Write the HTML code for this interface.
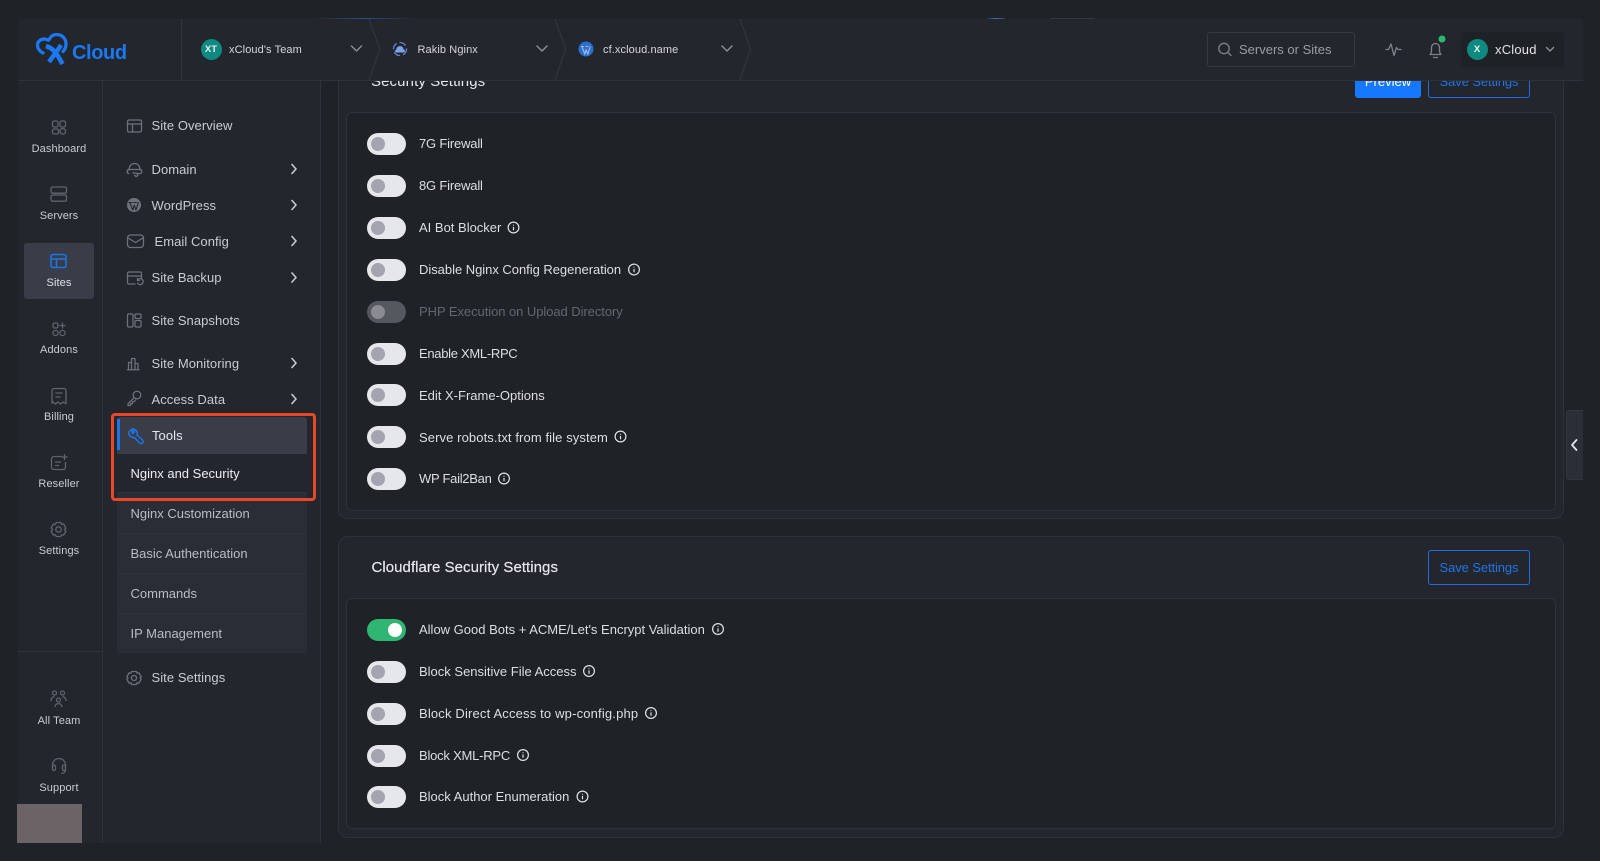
<!DOCTYPE html>
<html><head><meta charset="utf-8"><title>xCloud</title>
<style>
*{box-sizing:border-box}
html,body{margin:0;width:1600px;height:861px;overflow:hidden;background:#1f2226;font-family:"Liberation Sans",sans-serif;color:#e4e6ea}
.a{position:absolute}
.t{position:absolute;line-height:20px;height:20px;white-space:nowrap}
svg{position:absolute;overflow:visible}
.n{font-size:11px;letter-spacing:.1px;color:#c9ccd2;width:84px;left:17px;text-align:center}
.ni{fill:none;stroke:#5f636c;stroke-width:1.3}
.m{font-size:13px;letter-spacing:.06px;color:#c9ccd2;left:151.5px}
.sub{font-size:13px;letter-spacing:0;color:#b9bcc3;left:130.5px}
.l{font-size:13px;letter-spacing:0;color:#dcdfe3;left:419px}
.tg{position:absolute;left:367px;width:39px;height:22px;border-radius:11px;background:#e5e7eb}
.tg i{position:absolute;left:4px;top:4px;width:14px;height:14px;border-radius:50%;background:#a2a5af}
.ci{fill:none;stroke:#dfe2e6;stroke-width:1.2}
.ch{fill:none;stroke:#c6c9cf;stroke-width:1.6;stroke-linecap:round;stroke-linejoin:round}
.hch{fill:none;stroke:#8d9199;stroke-width:1.4;stroke-linecap:round;stroke-linejoin:round}
.ht{font-size:11px;letter-spacing:.1px;color:#d5d7db}
</style></head><body>

<!-- nav backgrounds -->
<div class="a" style="left:18px;top:80px;width:85px;height:763px;background:#23262d;border-right:1px solid #2e323a"></div>
<div class="a" style="left:103px;top:80px;width:218px;height:763px;background:#23262d;border-right:1px solid #2e323a"></div>

<!-- sections -->
<div class="a" style="left:338px;top:60px;width:1226px;height:459px;background:#23262d;border:1px solid #2e323a;border-radius:10px"></div>
<div class="a" style="left:346px;top:112px;width:1210px;height:399px;background:#1f2226;border:1px solid #2e323a;border-radius:6px"></div>
<div class="t" style="left:371px;top:72px;font-size:15px;letter-spacing:.1px;color:#e6e8ec">Security Settings</div>
<div class="a" style="left:1355px;top:62px;width:66px;height:36px;background:#1677ff;border-radius:3px"></div>
<div class="t" style="left:1355px;top:72px;width:66px;text-align:center;font-size:13px;color:#fff">Preview</div>
<div class="a" style="left:1428px;top:62px;width:102px;height:36px;border:1px solid #1d6fe0;border-radius:3px"></div>
<div class="t" style="left:1428px;top:72px;width:102px;text-align:center;font-size:13px;color:#1f74e6;letter-spacing:-.1px">Save Settings</div>

<div class="a" style="left:338px;top:536px;width:1226px;height:302px;background:#23262d;border:1px solid #2e323a;border-radius:10px"></div>
<div class="a" style="left:346px;top:598px;width:1210px;height:231px;background:#1f2226;border:1px solid #2e323a;border-radius:6px"></div>
<div class="t" style="left:371.5px;top:558px;font-size:15px;letter-spacing:.05px;color:#e6e8ec;-webkit-text-stroke:.2px #e6e8ec">Cloudflare Security Settings</div>
<div class="a" style="left:1428px;top:550px;width:102px;height:35px;border:1px solid #1d6fe0;border-radius:3px"></div>
<div class="t" style="left:1428px;top:558px;width:102px;text-align:center;font-size:13px;color:#1f74e6;letter-spacing:-.1px">Save Settings</div>

<!-- toggles section 1 -->
<div class="tg" style="top:133px"><i></i></div><div class="t l" style="top:134px;letter-spacing:-.18px">7G Firewall</div>
<div class="tg" style="top:175px"><i></i></div><div class="t l" style="top:176px;letter-spacing:-.18px">8G Firewall</div>
<div class="tg" style="top:217px"><i></i></div><div class="t l" style="top:218px">AI Bot Blocker</div>
<div class="tg" style="top:259px"><i></i></div><div class="t l" style="top:260px;letter-spacing:-.03px">Disable Nginx Config Regeneration</div>
<div class="tg" style="top:301px;background:#55585f"><i style="background:#8a8c92"></i></div><div class="t l" style="top:302px;color:#64676e;letter-spacing:-.06px">PHP Execution on Upload Directory</div>
<div class="tg" style="top:343px"><i></i></div><div class="t l" style="top:344px;letter-spacing:-.3px">Enable XML-RPC</div>
<div class="tg" style="top:384px"><i></i></div><div class="t l" style="top:386px">Edit X-Frame-Options</div>
<div class="tg" style="top:426px"><i></i></div><div class="t l" style="top:428px;letter-spacing:.1px">Serve robots.txt from file system</div>
<div class="tg" style="top:468px"><i></i></div><div class="t l" style="top:469px;letter-spacing:-.28px">WP Fail2Ban</div>

<!-- toggles section 2 -->
<div class="tg" style="top:619px;background:#2fb673"><i style="left:21px;background:#fff"></i></div><div class="t l" style="top:620px">Allow Good Bots + ACME/Let's Encrypt Validation</div>
<div class="tg" style="top:661px"><i></i></div><div class="t l" style="top:662px">Block Sensitive File Access</div>
<div class="tg" style="top:703px"><i></i></div><div class="t l" style="top:704px;letter-spacing:.17px">Block Direct Access to wp-config.php</div>
<div class="tg" style="top:745px"><i></i></div><div class="t l" style="top:746px;letter-spacing:-.22px">Block XML-RPC</div>
<div class="tg" style="top:786px"><i></i></div><div class="t l" style="top:787px">Block Author Enumeration</div>

<!-- info icons -->
<svg width="1600" height="861" style="left:0;top:0">
<defs><g id="inf"><circle r="5.4" class="ci"/><path d="M0-.6V2.8M0-2.8v.9" class="ci"/></g></defs>
<use href="#inf" x="513.5" y="227.5"/>
<use href="#inf" x="634" y="269.5"/>
<use href="#inf" x="620.5" y="436.5"/>
<use href="#inf" x="504" y="478.5"/>
<use href="#inf" x="718" y="629"/>
<use href="#inf" x="589" y="671"/>
<use href="#inf" x="651" y="713"/>
<use href="#inf" x="523" y="755"/>
<use href="#inf" x="582.5" y="796.5"/>
</svg>

<!-- side nav -->
<div class="a" style="left:24px;top:243px;width:70px;height:56px;background:#383d48;border-radius:3px"></div>
<div class="a" style="left:18px;top:651px;width:84px;height:1px;background:#30343c"></div>
<div class="t n" style="top:139px">Dashboard</div>
<div class="t n" style="top:206px">Servers</div>
<div class="t n" style="top:273px;color:#e0e2e6">Sites</div>
<div class="t n" style="top:340px">Addons</div>
<div class="t n" style="top:407px">Billing</div>
<div class="t n" style="top:474px">Reseller</div>
<div class="t n" style="top:541px">Settings</div>
<div class="t n" style="top:711px">All Team</div>
<div class="t n" style="top:778px">Support</div>

<svg width="1600" height="861" style="left:0;top:0">
<g class="ni">
<!-- dashboard -->
<rect x="52.5" y="121" width="5.5" height="6" rx="1.6"/><rect x="60" y="121" width="5.5" height="6" rx="1.6"/><rect x="52.5" y="129" width="6" height="5" rx="1.6"/><rect x="60" y="128.5" width="5.5" height="5.5" rx="2.5"/>
<!-- servers -->
<rect x="51" y="187" width="15.5" height="6.2" rx="1.5"/><rect x="51" y="195" width="15.5" height="6.2" rx="1.5"/>
<!-- addons -->
<rect x="53" y="323" width="5" height="5" rx="1.7"/><path d="M62.5 322.5v6M59.5 325.5h6"/><circle cx="55.5" cy="333" r="2.6"/><circle cx="62.5" cy="333" r="2.6"/>
<!-- billing -->
<path d="M52 390.5a2 2 0 0 1 2-2h10a2 2 0 0 1 2 2v13l-3-1.5-2.5 2-2.5-2-2.5 2-2.5-2-1 .8z"/><path d="M55.5 393h7M55.5 397h5"/>
<!-- reseller -->
<path d="M62 456.5h-8a2.5 2.5 0 0 0-2.5 2.5v8a2.5 2.5 0 0 0 2.5 2.5h9a2.5 2.5 0 0 0 2.5-2.5v-5"/><path d="M55 462h6M55 465.5h4M64.5 454v6M61.5 457h6"/>
<!-- settings -->
<circle cx="58.5" cy="529.5" r="2.7"/><path d="M56.2 522.5h4.6l.8 1.9 2-.4 2.3 4-1.4 1.5 1.4 1.6-2.3 4-2-.4-.8 1.8h-4.6l-.8-1.8-2 .4-2.3-4 1.4-1.6-1.4-1.5 2.3-4 2 .4z"/>
<!-- team -->
<circle cx="54.5" cy="693" r="2"/><circle cx="62.5" cy="693" r="2"/><circle cx="58.5" cy="700" r="2"/><path d="M51 701c0-2.8 1.500-4.300 3.500-4.300M66 701c0-2.800-1.500-4.300-3.500-4.300M55 707c0-2 1.500-3.400 3.500-3.400s3.500 1.400 3.500 3.400"/>
<!-- support -->
<path d="M52.500 769v-4a6.500 6.500 0 0 1 13 0v4"/><rect x="52.500" y="765" width="3" height="5.500" rx="1.500"/><rect x="62.500" y="765" width="3" height="5.500" rx="1.500"/><path d="M65.500 770c0 2-1.500 3.300-4 3.300"/>
</g>
<!-- sites -->
<g fill="none" stroke="#1f74e6" stroke-width="1.500"><rect x="51" y="254.500" width="15" height="13" rx="2"/><path d="M51 259h15M56.500 259v8.500"/></g>
</svg>
<div class="a" style="left:17px;top:804px;width:65px;height:39px;background:#6b6366"></div>

<!-- sub menu -->
<div class="a" style="left:117px;top:454px;width:190px;height:199px;background:#2a2d36"></div>
<div class="a" style="left:117px;top:417px;width:190px;height:37px;background:#383d48;border-radius:3px 3px 0 0"></div>
<div class="a" style="left:117px;top:419px;width:2.500px;height:31px;background:#1f74e6"></div>
<div class="a" style="left:117px;top:454px;width:190px;height:39px;background:#23262e;border-bottom:1px solid #2f333c"></div>
<div class="a" style="left:117px;top:533px;width:190px;height:1px;background:#2f333c"></div>
<div class="a" style="left:117px;top:573px;width:190px;height:1px;background:#2f333c"></div>
<div class="a" style="left:117px;top:613px;width:190px;height:1px;background:#2f333c"></div>

<div class="t m" style="top:116px">Site Overview</div>
<div class="t m" style="top:160px">Domain</div>
<div class="t m" style="top:196px">WordPress</div>
<div class="t m" style="top:231.500px;left:154.500px">Email Config</div>
<div class="t m" style="top:268px">Site Backup</div>
<div class="t m" style="top:311px">Site Snapshots</div>
<div class="t m" style="top:354px">Site Monitoring</div>
<div class="t m" style="top:390px">Access Data</div>
<div class="t m" style="top:426px;left:152px;color:#e6e8ec">Tools</div>
<div class="t sub" style="top:464px;color:#eceef1">Nginx and Security</div>
<div class="t sub" style="top:504px">Nginx Customization</div>
<div class="t sub" style="top:544px">Basic Authentication</div>
<div class="t sub" style="top:584px">Commands</div>
<div class="t sub" style="top:624px">IP Management</div>
<div class="t m" style="top:668px">Site Settings</div>

<svg width="1600" height="861" style="left:0;top:0">
<g fill="none" stroke="#6d727c" stroke-width="1.250" stroke-linecap="round" stroke-linejoin="round">
<!-- overview -->
<rect x="127.500" y="120" width="14" height="12" rx="1.500"/><path d="M127.500 124h14M132.500 124v8"/>
<!-- domain -->
<path d="M129 173.500c-2.500 0-2.500-3.500 0-3.700 .3-4.500 2.700-6.300 5.500-6.300s5.200 1.800 5.500 6.300c2 .3 2.300 2.500 1 3.700h-3"/><path d="M128 169.500h13M133 173h3.500l1.500 2.500-2 1.200-1.500-1.500"/>
<!-- wp -->
<circle cx="134" cy="205" r="7" fill="#6d727c" stroke="none"/><path d="M129.800 202.500l3 7.500 1.500-5 1.700 5 2.300-7.500M129 202.500h3M133.500 202.500h3" stroke="#23262d" stroke-width="1.100"/>
<!-- email -->
<rect x="127.500" y="235" width="16" height="12.500" rx="3"/><path d="M128 238l7.500 4.500 7.500-4.500"/>
<!-- backup -->
<path d="M141.500 278v-4.500a1.500 1.500 0 0 0-1.500-1.500h-11a1.500 1.500 0 0 0-1.500 1.500v9a1.500 1.500 0 0 0 1.500 1.500h6"/><path d="M127.500 276h14M138 279.500a3 3 0 1 1-.5 3.500M137.500 278.500v2h2"/>
<!-- snapshots -->
<rect x="127.500" y="314" width="5.500" height="13" rx="1.200"/><rect x="135" y="314" width="6" height="4.500" rx="1.200"/><rect x="135" y="320.500" width="6" height="6.500" rx="1.200"/>
<!-- monitoring -->
<path d="M128.500 369.500v-7h3v7M131.500 369.500v-11h3.500v11M135 369.500v-6h3v6M127.500 369.800h11.500"/>
<!-- key -->
<circle cx="137" cy="395" r="3.800"/><path d="M134.300 397.500l-6.300 6.300v1.700h2.500v-1.800h1.800v-1.800h1.600l1.800-2"/>
<!-- settings -->
<circle cx="134" cy="678" r="2.500"/><path d="M131.600 671.500h4.800l.7 1.700 1.900-.3 2.200 3.900-1.200 1.200 1.200 1.200-2.200 3.900-1.900-.3-.7 1.700h-4.800l-.7-1.700-1.900.3-2.200-3.900 1.200-1.200-1.200-1.200 2.200-3.900 1.900.3z"/>
</g>
<!-- tools -->
<g fill="none" stroke="#1f74e6" stroke-width="1.500" stroke-linecap="round" stroke-linejoin="round"><path d="M132 429l-3 3a4.600 4.600 0 0 0 5.500 5.500l5 5.500a2 2 0 0 0 3-3l-5.500-5a4.600 4.600 0 0 0-5-6l2.500 3-2 1.800z"/></g>
<!-- chevrons -->
<path class="ch" d="M292 164.500l4 4.500-4 4.500M292 200.500l4 4.500-4 4.500M292 236.500l4 4.500-4 4.500M292 273l4 4.500-4 4.500M292 358.500l4 4.500-4 4.500M292 394.500l4 4.500-4 4.500"/>
</svg>

<!-- red box -->
<div class="a" style="left:110.500px;top:413px;width:205px;height:88px;border:3px solid #e8482a;border-radius:4px"></div>

<!-- header -->
<div class="a" style="left:18px;top:19px;width:1565px;height:62px;background:#23262d;border-bottom:1px solid #2e323a"></div>
<div class="a" style="left:310px;top:17.500px;width:110px;height:1.500px;background:linear-gradient(90deg,transparent,#2a4f8f,transparent)"></div>
<div class="a" style="left:985px;top:17.500px;width:20px;height:1.500px;background:linear-gradient(90deg,transparent,#3a6bb8,#3b4350)"></div>
<div class="a" style="left:1050px;top:18px;width:45px;height:1px;background:#33373e"></div>
<div class="a" style="left:180.500px;top:19px;width:1px;height:61px;background:#30343c"></div>

<svg width="1600" height="861" style="left:0;top:0">
<!-- logo -->
<g fill="none" stroke="#1a78f5" stroke-linecap="round" stroke-linejoin="round">
<path stroke-width="3.300" d="M43 53c-3-1.500-5.500-4.500-5.500-8 0-3.500 3-6 6.500-6 1.500 0 2.800.3 4.300 1.300M49.500 39c1.500-3 4-4.500 7-4.500 5.500 0 9.500 4 9.500 9.500 0 3-1 5.500-3 7.500"/>
<path stroke-width="4.600" stroke-linecap="butt" d="M46 46c5 1.500 9 5 12 10l4.500 8"/>
<path stroke-width="4.600" stroke-linecap="butt" d="M61 45c-3 5-7 10-12 17"/>
</g>
<!-- breadcrumb separators -->
<g fill="none" stroke="#34383f" stroke-width="1"><path d="M369 19l11 30-11 31M555 19l10.500 30-10.500 31M740 19l10.500 30-10.500 31"/></g>
<!-- hdr chevrons -->
<path class="hch" d="M351.500 46l5 5 5-5M537 46l5 5 5-5M722 46l5 5 5-5"/>
<!-- cloud icon -->
<circle cx="400" cy="49" r="6.500" fill="none" stroke="#5c85d6" stroke-width="1.300" stroke-dasharray="7 3"/>
<path d="M396.500 52.500c-1.800 0-2-2.600-.2-2.900.2-2.200 1.800-3.500 3.700-3.500s3.500 1.300 3.700 3.500c1.800.3 1.600 2.900-.2 2.900z" fill="#7ea3e8"/>
<!-- wp icon -->
<circle cx="586" cy="49" r="7.500" fill="#2c6ecb"/>
<path d="M581.800 46.500l3 7.500 1.300-4 1.700 4 2.500-7.500M581 46.500h3M585.500 46.500h3" fill="none" stroke="#9dbcec" stroke-width="1.100"/>
</svg>

<!-- team avatars -->
<div class="a" style="left:200.500px;top:38.500px;width:21px;height:21px;border-radius:50%;background:#0f8a80;color:#e8f2f1;font-size:9.500px;font-weight:700;line-height:21px;text-align:center">XT</div>
<div class="t ht" style="left:229px;top:40px">xCloud's Team</div>
<div class="t ht" style="left:417.500px;top:40px">Rakib Nginx</div>
<div class="t ht" style="left:603px;top:40px">cf.xcloud.name</div>
<div class="t" style="left:72px;top:43px;font-size:20px;font-weight:700;color:#1a78f5;letter-spacing:-.4px">Cloud</div>

<!-- search -->
<div class="a" style="left:1207px;top:32px;width:148px;height:35px;border:1px solid #343841;border-radius:3px"></div>
<div class="t" style="left:1239px;top:40px;font-size:13px;letter-spacing:0;color:#9a9da4">Servers or Sites</div>
<svg width="1600" height="861" style="left:0;top:0">
<g fill="none" stroke="#7f828b" stroke-width="1.300" stroke-linecap="round" stroke-linejoin="round">
<circle cx="1224" cy="48.500" r="5.200"/><path d="M1228 52.500l3 3"/>
<path d="M1386 49.500h2.500l2.500-5.500 3 11.500 2.500-8 1.500 2h3"/>
<path d="M1430 54.500c1.200-1 1.500-2.500 1.500-4.500v-2.500a4 4 0 0 1 8 0v2.500c0 2 .3 3.500 1.500 4.500zM1433.500 57.500h4"/>
</g>
<circle cx="1442" cy="39" r="3.500" fill="#2fb673"/>
</svg>

<!-- user -->
<div class="a" style="left:1461px;top:32px;width:103px;height:35px;background:#1e2126;border-radius:4px"></div>
<div class="a" style="left:1466.500px;top:38.500px;width:21px;height:21px;border-radius:50%;background:#0f8a80;color:#e8f2f1;font-size:9.500px;font-weight:700;line-height:21px;text-align:center">X</div>
<svg width="1600" height="861" style="left:0;top:0"><path class="hch" d="M1546.500 47.500l3.500 3.500 3.500-3.500"/></svg>
<div class="t" style="left:1495px;top:40px;font-size:13px;letter-spacing:.2px;color:#e2e4e8">xCloud</div>

<!-- collapse tab -->
<div class="a" style="left:1566px;top:410px;width:17px;height:70px;background:#2a2e37;border-radius:3px 0 0 3px;border:1px solid #32363f;border-right:0"></div>
<svg width="1600" height="861" style="left:0;top:0"><path d="M1576.500 440l-4.500 5 4.500 5" fill="none" stroke="#e4e6ea" stroke-width="1.800" stroke-linecap="round" stroke-linejoin="round"/></svg>

</body></html>
